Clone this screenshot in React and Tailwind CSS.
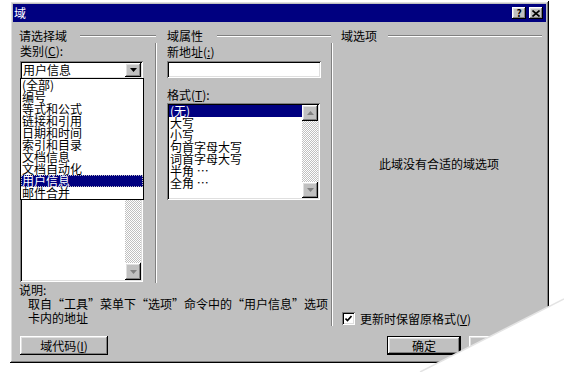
import React from "react";

const sunken =
  "shadow-[inset_1px_1px_0_#808080,inset_-1px_-1px_0_#fff,inset_2px_2px_0_#000,inset_-2px_-2px_0_#dfdfdf]";
const raised =
  "shadow-[inset_-1px_-1px_0_#000,inset_1px_1px_0_#fff,inset_-2px_-2px_0_#808080,inset_2px_2px_0_#dfdfdf]";
const dither = "bg-[repeating-conic-gradient(#fff_0_25%,#c0c0c0_0_50%)] bg-[length:2px_2px]";

const Arrow = ({ up, color = "#000" }) => (
  <svg width="7" height="4" viewBox="0 0 7 4">
    <path d={up ? "M0 4h7L3.5 0z" : "M0 0h7L3.5 4z"} fill={color} />
  </svg>
);

const EtchLine = ({ className = "" }) => (
  <div className={`flex-1 h-[2px] border-t border-t-[#808080] border-b border-b-white ${className}`} />
);

const categories = [
  "(全部)",
  "编号",
  "等式和公式",
  "链接和引用",
  "日期和时间",
  "索引和目录",
  "文档信息",
  "文档自动化",
  "用户信息",
  "邮件合并",
];

const formats = ["(无)", "大写", "小写", "句首字母大写", "词首字母大写", "半角 …", "全角 …"];

export default function App() {
  return (
    <div className="relative w-[564px] h-[372px] overflow-hidden bg-white font-['Noto_Sans_CJK_SC',sans-serif] text-[12px] leading-[12px] text-black">
      <div className="pl-[10px] pt-[1px]">
        <div className={`w-[539px] h-[362px] bg-[#c0c0c0] p-[3px] flex flex-col ${raised}`}>
          {/* Title bar */}
          <div className="h-[18px] bg-[#000080] flex items-center pl-[1px] pr-[3px]">
            <span className="text-white">域</span>
            <div className="ml-auto flex gap-[3px]">
              <div className={`w-[14px] h-[12px] bg-[#c0c0c0] flex items-center justify-center text-[10px] font-bold ${raised}`}>
                ?
              </div>
              <div className={`w-[14px] h-[12px] bg-[#c0c0c0] flex items-center justify-center ${raised}`}>
                <svg width="8" height="7" viewBox="0 0 8 7">
                  <path d="M0.5 0.5L7.5 6.5M7.5 0.5L0.5 6.5" stroke="#000" strokeWidth="1.6" />
                </svg>
              </div>
            </div>
          </div>

          {/* Body */}
          <div className="flex pt-[8px]">
            <div className="w-[318px] flex flex-col">
              <div className="flex">
                {/* 请选择域 */}
                <div className="w-[143px] flex flex-col">
                  <div className="h-[12px] flex items-center pl-[6px] mb-[1px]">
                    <span>请选择域</span>
                    <EtchLine className="ml-[13px]" />
                  </div>
                  <div className="relative h-[240px] pl-[7px] pt-[2px] border-r border-r-[#808080] shadow-[1px_0_0_#fff]">
                    <div>
                      类别(<u>C</u>):
                    </div>
                    <div className={`mt-[4px] w-[123px] h-[18px] bg-white flex items-center p-[2px] ${sunken}`}>
                      <span className="pl-[1px]">用户信息</span>
                      <div className={`ml-auto w-[16px] h-[14px] bg-[#c0c0c0] flex items-center justify-center ${raised}`}>
                        <Arrow />
                      </div>
                    </div>
                    <div className={`mt-[2px] w-[123px] h-[201px] bg-white flex justify-end p-[2px] ${sunken}`}>
                      <div className={`w-[16px] h-full flex flex-col justify-end ${dither}`}>
                        <div className={`h-[17px] bg-[#c0c0c0] flex items-center justify-center ${raised}`}>
                          <Arrow color="#808080" />
                        </div>
                      </div>
                    </div>
                    {/* opened dropdown */}
                    <div className="absolute left-[7px] top-[35px] w-[124px] h-[122px] border border-black bg-white">
                      {categories.map((c) => (
                        <div
                          key={c}
                          className={
                            c === "用户信息"
                              ? "h-[12px] pl-[1px] bg-[#000080] text-white outline outline-1 outline-dotted outline-[#c0c0c0] -outline-offset-1 whitespace-nowrap"
                              : "h-[12px] pl-[1px] whitespace-nowrap"
                          }
                        >
                          {c}
                        </div>
                      ))}
                    </div>
                  </div>
                </div>

                {/* 域属性 */}
                <div className="w-[175px] flex flex-col">
                  <div className="h-[12px] flex items-center pl-[11px] mb-[1px]">
                    <span>域属性</span>
                    <EtchLine className="ml-[14px]" />
                  </div>
                  <div className="pl-[11px] pt-[3px]">
                    <div>
                      新地址(<u>:</u>)
                    </div>
                    <div className={`mt-[3px] w-[154px] h-[17px] bg-white ${sunken}`} />
                    <div className="mt-[11px]">
                      格式(<u>T</u>):
                    </div>
                    <div className={`mt-[2px] w-[153px] h-[97px] bg-white flex p-[2px] ${sunken}`}>
                      <div className="flex-1">
                        {formats.map((f, i) => (
                          <div
                            key={f}
                            className={
                              i === 0
                                ? "h-[12px] pl-[1px] bg-[#000080] text-white whitespace-nowrap"
                                : "h-[12px] pl-[1px] whitespace-nowrap"
                            }
                          >
                            {f}
                          </div>
                        ))}
                      </div>
                      <div className={`w-[16px] h-full flex flex-col justify-between ${dither}`}>
                        <div className={`h-[16px] bg-[#c0c0c0] flex items-center justify-center ${raised}`}>
                          <Arrow up color="#808080" />
                        </div>
                        <div className={`h-[16px] bg-[#c0c0c0] flex items-center justify-center ${raised}`}>
                          <Arrow color="#808080" />
                        </div>
                      </div>
                    </div>
                  </div>
                </div>
              </div>

              {/* 说明 */}
              <div className="pl-[6px] leading-[14px]">
                <div>说明:</div>
                <div className="pl-[9px] whitespace-nowrap">取自“工具”菜单下“选项”命令中的“用户信息”选项</div>
                <div className="pl-[9px]">卡内的地址</div>
              </div>
            </div>

            {/* 域选项 */}
            <div className="w-[215px] flex flex-col">
              <div className="h-[12px] flex items-center pl-[10px] pr-[4px] mb-[1px]">
                <span>域选项</span>
                <EtchLine className="ml-[11px]" />
              </div>
              <div className="h-[283px] flex flex-col border-l border-l-[#808080] shadow-[inset_1px_0_0_#fff]">
                <div className="mt-[115px] text-center">此域没有合适的域选项</div>
                <div className="mt-auto mb-[1px] flex items-center pl-[10px]">
                  <div className={`w-[13px] h-[13px] bg-white flex items-center justify-center ${sunken}`}>
                    <svg width="7" height="7" viewBox="0 0 7 7">
                      <path d="M0.5 3.5L2.5 5.5L6.5 1" stroke="#000" strokeWidth="1.6" fill="none" />
                    </svg>
                  </div>
                  <span className="ml-[5px]">
                    更新时保留原格式(<u>V</u>)
                  </span>
                </div>
              </div>
            </div>
          </div>

          {/* Buttons */}
          <div className="flex mt-[10px]">
            <div className={`ml-[7px] w-[88px] h-[19px] bg-[#c0c0c0] flex items-center justify-center ${raised}`}>
              域代码(<u>I</u>)
            </div>
            <div className="ml-auto w-[74px] h-[19px] border border-black">
              <div className={`w-full h-full bg-[#c0c0c0] flex items-center justify-center ${raised}`}>确定</div>
            </div>
            <div className={`ml-[8px] mr-[3px] w-[74px] h-[19px] bg-[#c0c0c0] flex items-center justify-center ${raised}`}>
              取消
            </div>
          </div>
        </div>
      </div>

      {/* page curl */}
      <svg className="absolute left-0 top-0 pointer-events-none" width="564" height="372" viewBox="0 0 564 372">
        <polygon points="564,299 564,372 420,372" fill="#fff" />
        <line x1="564" y1="299" x2="420" y2="372" stroke="#e4e4e4" strokeWidth="1.5" />
      </svg>
    </div>
  );
}
